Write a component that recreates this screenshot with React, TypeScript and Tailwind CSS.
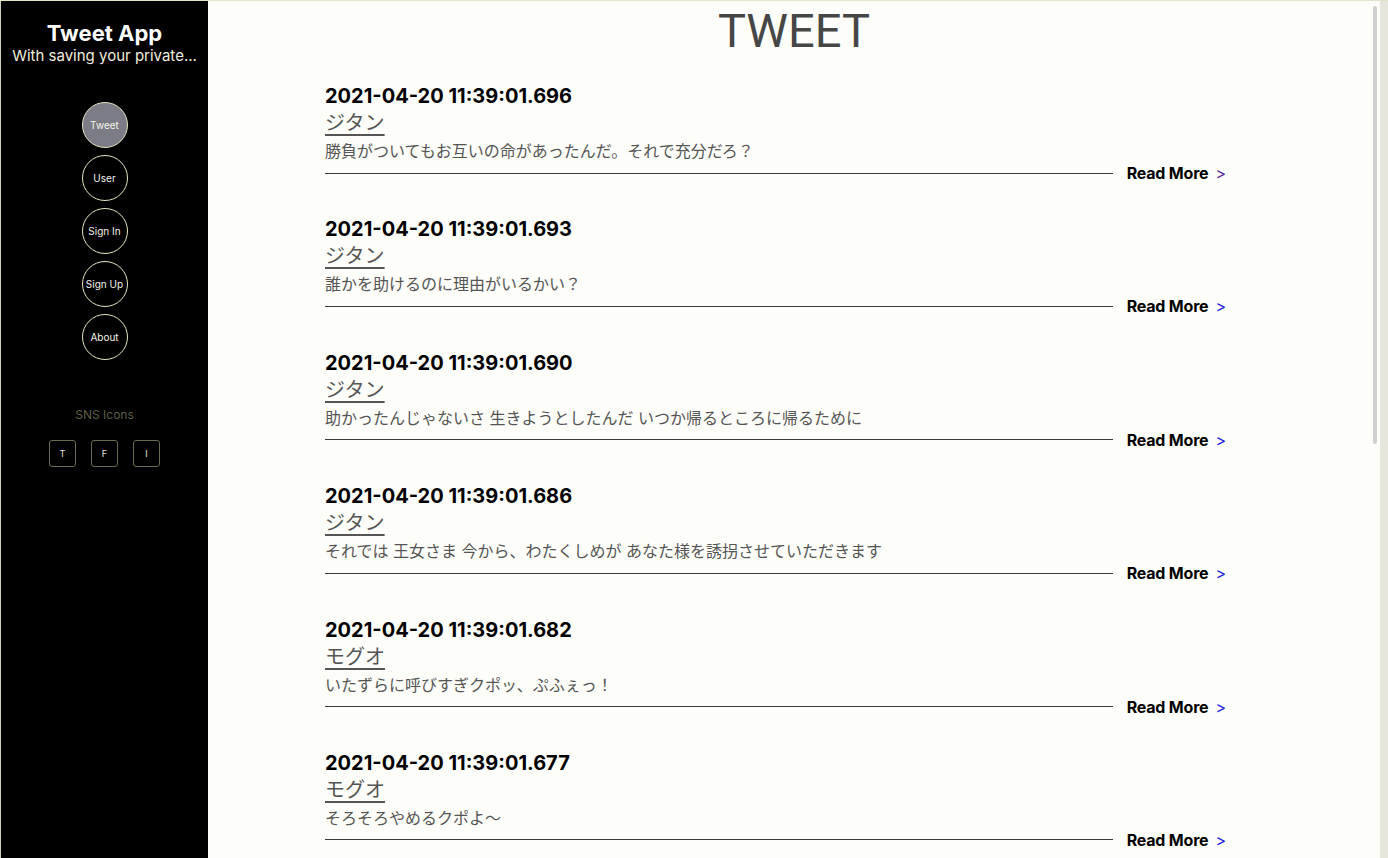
import React from 'react';

type Tweet = {
  id: number;
  createdAt: string;
  user: string;
  text: string;
};

const tweets: Tweet[] = [
  { id: 1, createdAt: '2021-04-20 11:39:01.696', user: 'ジタン', text: '勝負がついてもお互いの命があったんだ。それで充分だろ？' },
  { id: 2, createdAt: '2021-04-20 11:39:01.693', user: 'ジタン', text: '誰かを助けるのに理由がいるかい？' },
  { id: 3, createdAt: '2021-04-20 11:39:01.690', user: 'ジタン', text: '助かったんじゃないさ 生きようとしたんだ いつか帰るところに帰るために' },
  { id: 4, createdAt: '2021-04-20 11:39:01.686', user: 'ジタン', text: 'それでは 王女さま 今から、わたくしめが あなた様を誘拐させていただきます' },
  { id: 5, createdAt: '2021-04-20 11:39:01.682', user: 'モグオ', text: 'いたずらに呼びすぎクポッ、ぷふぇっ！' },
  { id: 6, createdAt: '2021-04-20 11:39:01.677', user: 'モグオ', text: 'そろそろやめるクポよ〜' },
];

const navItems = ['Tweet', 'User', 'Sign In', 'Sign Up', 'About'];

const font = { fontFamily: 'Inter, "Noto Sans CJK JP", sans-serif' };

const Sidebar: React.FC = () => (
  <aside className="w-[208px] shrink-0 bg-black flex flex-col items-center border-l border-[#cfcfc0]">
    {/* Brand */}
    <div className="w-full px-[4px] pt-[18px] text-center">
      <h1 className="text-[22px] leading-[28px] font-bold text-white">Tweet App</h1>
      <p className="text-[15px] leading-[18px] text-[#eeeedd] whitespace-nowrap">With saving your private...</p>
    </div>

    {/* Nav */}
    <nav className="mt-[37px] flex flex-col items-center gap-[7px]">
      {navItems.map((item, i) => (
        <a
          key={item}
          className={
            'w-[46px] h-[46px] rounded-full border border-[#e6e6c4] flex items-center justify-center text-[10px] text-[#f4f4e8] ' +
            (i === 0 ? 'bg-[#7c7c86]' : 'bg-black')
          }
        >
          {item}
        </a>
      ))}
    </nav>

    {/* SNS */}
    <div className="mt-[46px] text-[12px] text-[#5e5e44]">SNS Icons</div>
    <div className="mt-[16px] flex gap-[15px]">
      {['T', 'F', 'I'].map((s) => (
        <div
          key={s}
          className="w-[27px] h-[27px] rounded-[3px] border border-[#6a6a50] flex items-center justify-center text-[9px] text-[#e8e8dc]"
        >
          {s}
        </div>
      ))}
    </div>
  </aside>
);

const TweetItem: React.FC<{ tweet: Tweet; visited?: boolean }> = ({ tweet, visited }) => (
  <div className="pb-[32.4px]">
    <div className="text-[20px] leading-[28px] font-bold text-black">{tweet.createdAt}</div>
    <a className="inline-block text-[20px] leading-[27px] text-[#555555] underline underline-offset-[4px]">{tweet.user}</a>
    <p className="mt-[2px] text-[16px] leading-[24px] text-[#555555]">{tweet.text}</p>
    <div className="flex items-center h-[20px]">
      <div className="flex-1 h-px bg-[#3a3a3a]" />
      <span className="ml-[14px] text-[16px] font-bold text-black tracking-[-0.2px]">Read More</span>
      <span className={'ml-[7px] text-[16px] ' + (visited ? 'text-[#5b2a9a]' : 'text-[#2222dd]')}>&gt;</span>
    </div>
  </div>
);

export default function App() {
  return (
    <div className="h-[858px] w-full flex overflow-hidden border-t border-[#e4e4c8]" style={font}>
      <Sidebar />
      <main className="relative flex-1 bg-[#fdfdf9] overflow-hidden">
        <h2
          className="text-center text-[47px] leading-[56px] pt-[2px] text-[#464646] font-normal"
          style={{ fontFamily: 'Roboto, Arial, sans-serif' }}
        >
          TWEET
        </h2>
        <div className="ml-[117px] w-[901px] mt-[23px]">
          {tweets.map((t, i) => (
            <TweetItem key={t.id} tweet={t} visited={i === 0} />
          ))}
        </div>
        {/* overlay scrollbar */}
        <div className="absolute right-[3px] top-[5px] w-[4px] h-[438px] rounded-full bg-[#cfcfcf]" />
      </main>
      <div className="w-[8px] shrink-0 bg-[#e6e6dc]" />
    </div>
  );
}
